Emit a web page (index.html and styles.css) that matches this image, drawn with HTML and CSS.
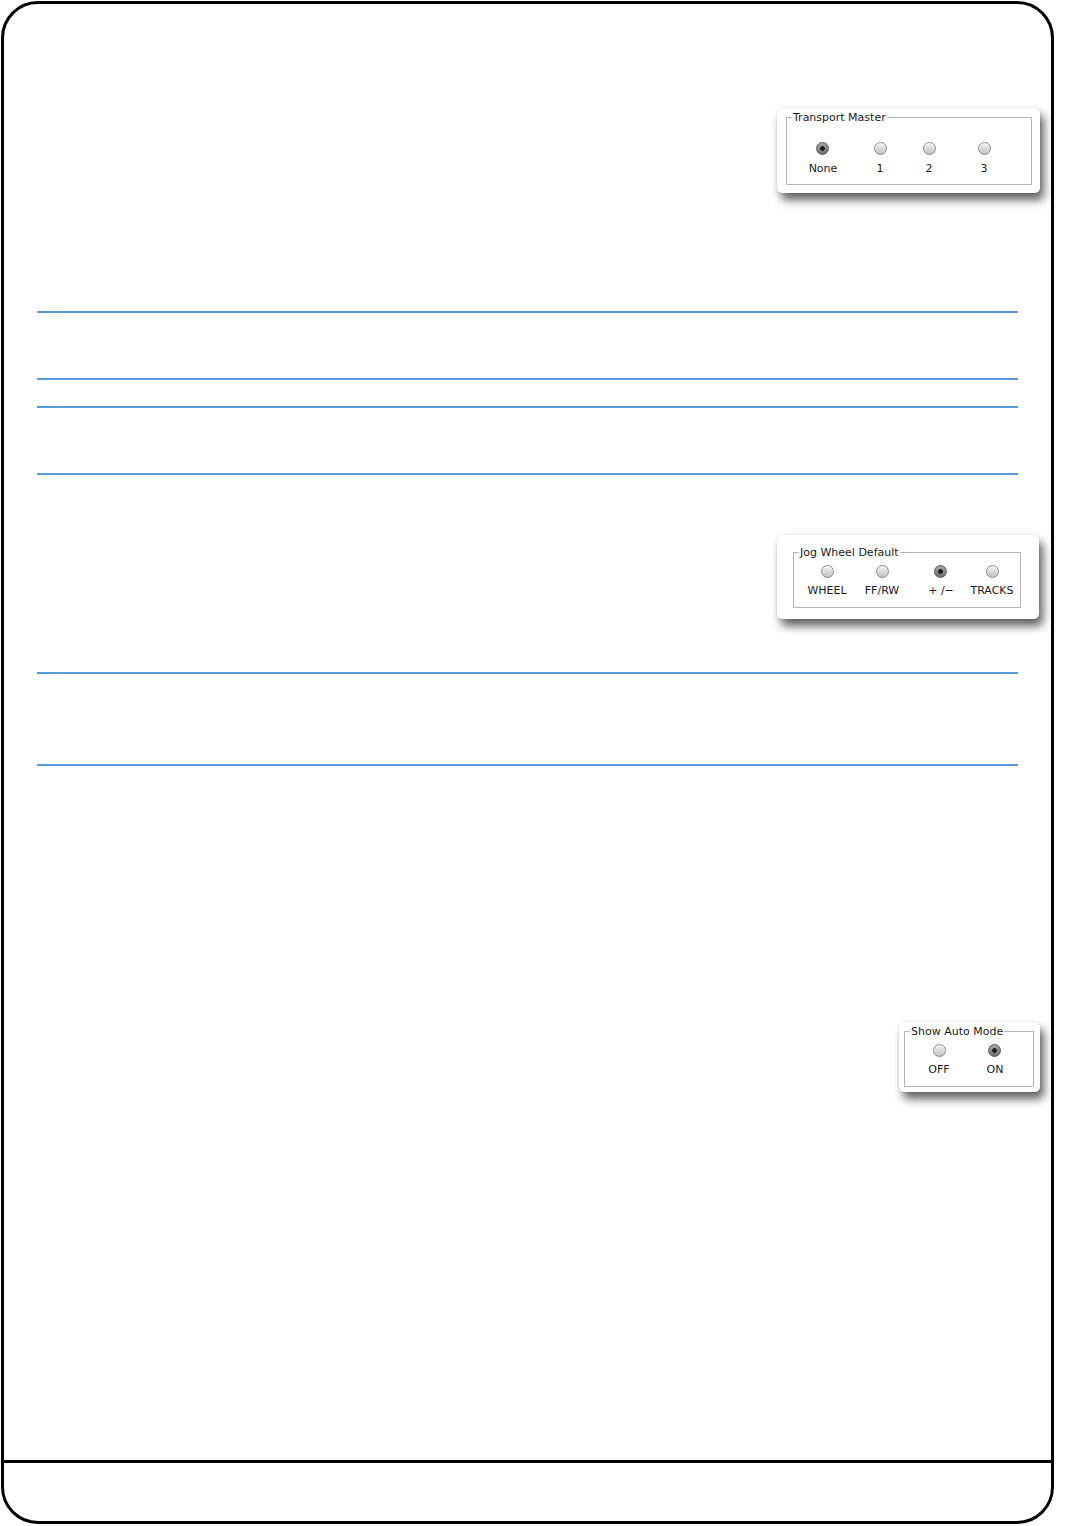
FILE: index.html
```html
<!DOCTYPE html>
<html>
<head>
<meta charset="utf-8">
<link rel="stylesheet" href="styles.css">
</head>
<body>
<div class="page">
  <div class="main">
    <div class="panel panel-transport">
      <fieldset class="group">
        <legend>Transport Master</legend>
        <div class="options opts-transport">
          <div class="option"><span class="radio on"></span><span class="label">None</span></div>
          <div class="option"><span class="radio"></span><span class="label">1</span></div>
          <div class="option"><span class="radio"></span><span class="label">2</span></div>
          <div class="option"><span class="radio"></span><span class="label">3</span></div>
        </div>
      </fieldset>
    </div>

    <div class="rule r1"></div>
    <div class="rule r2"></div>
    <div class="rule r3"></div>
    <div class="rule r4"></div>

    <div class="panel panel-jog">
      <fieldset class="group">
        <legend>Jog Wheel Default</legend>
        <div class="options opts-jog">
          <div class="option"><span class="radio"></span><span class="label">WHEEL</span></div>
          <div class="option"><span class="radio"></span><span class="label">FF/RW</span></div>
          <div class="option"><span class="radio on"></span><span class="label">+ /&minus;</span></div>
          <div class="option"><span class="radio"></span><span class="label">TRACKS</span></div>
        </div>
      </fieldset>
    </div>

    <div class="rule r5"></div>
    <div class="rule r6"></div>

    <div class="panel panel-auto">
      <fieldset class="group">
        <legend>Show Auto Mode</legend>
        <div class="options opts-auto">
          <div class="option"><span class="radio"></span><span class="label">OFF</span></div>
          <div class="option"><span class="radio on"></span><span class="label">ON</span></div>
        </div>
      </fieldset>
    </div>
  </div>
  <div class="footer"></div>
</div>
</body>
</html>
```

FILE: styles.css
```css
html, body {
  margin: 0;
  padding: 0;
  background: #fff;
}

body {
  font-family: "DejaVu Sans", "Liberation Sans", sans-serif;
  color: #1a1a1a;
}

.page {
  margin: 1px 0 0 1px;
  width: 1053px;
  height: 1523px;
  box-sizing: border-box;
  border: 3px solid #000;
  border-radius: 37px;
  display: flex;
  flex-direction: column;
  overflow: hidden;
}

.main {
  flex: 1;
  display: flex;
  flex-direction: column;
  align-items: flex-start;
}

.footer {
  height: 58px;
  border-top: 3px solid #000;
}

.rule {
  margin-left: 33px;
  width: 981px;
  height: 2px;
  background: #5b9bd5;
}

.r1 { margin-top: 118px; }
.r2 { margin-top: 65px; }
.r3 { margin-top: 26px; }
.r4 { margin-top: 65px; }
.r5 { margin-top: 53px; }
.r6 { margin-top: 90px; }

.panel {
  align-self: flex-end;
  background: #fff;
  border-radius: 5px;
  box-shadow: 4px 7px 10px rgba(0, 0, 0, 0.62), 0 0 2px rgba(0, 0, 0, 0.15);
  box-sizing: border-box;
}

.panel-transport {
  margin-top: 104px;
  margin-right: 11px;
  width: 263px;
  padding: 3px 8px 8px 9px;
}

.panel-jog {
  margin-top: 60px;
  margin-right: 12px;
  width: 262px;
  padding: 11px 18px 11px 16px;
}

.panel-auto {
  margin-top: 256px;
  margin-right: 11px;
  width: 141px;
  padding: 3px 6px 5px 5px;
}

.group {
  margin: 0;
  padding: 0 0 10px 0;
  border: 1px solid #b4b4b4;
  min-width: 0;
}

.group legend {
  margin-left: 5px;
  padding: 0 1px;
  font-size: 11px;
  line-height: 13px;
  color: #1a1a1a;
}

.panel-transport .group {
  padding-top: 18px;
  padding-bottom: 9px;
}

.panel-jog .group {
  padding-top: 6px;
}

.panel-auto .group {
  padding-top: 6px;
}

.options {
  display: grid;
  justify-items: center;
}

.opts-transport {
  padding-left: 8px;
  grid-template-columns: 56px 58px 40px 70px;
}

.opts-jog {
  padding-left: 9px;
  grid-template-columns: 48px 62px 56px 46px;
}

.opts-auto {
  padding-left: 9px;
  grid-template-columns: 50px 62px;
}

.option {
  display: flex;
  flex-direction: column;
  align-items: center;
  gap: 6px;
}

.panel-transport .option {
  gap: 7px;
}

.radio {
  display: block;
  width: 13px;
  height: 13px;
  box-sizing: border-box;
  border-radius: 50%;
  border: 1px solid #8a8a8a;
  background: linear-gradient(#f2f2f2, #c2c2c2);
  box-shadow: inset 0 1px 1px rgba(255, 255, 255, 0.8);
}

.radio.on {
  border-color: #5a5a5a;
  background:
    radial-gradient(circle, #1e1e1e 0 2px, rgba(0, 0, 0, 0) 2.6px),
    linear-gradient(#a8a8a8, #6c6c6c);
  box-shadow: none;
}

.label {
  font-size: 11px;
  line-height: 13px;
  white-space: nowrap;
  color: #1a1a1a;
}
```
